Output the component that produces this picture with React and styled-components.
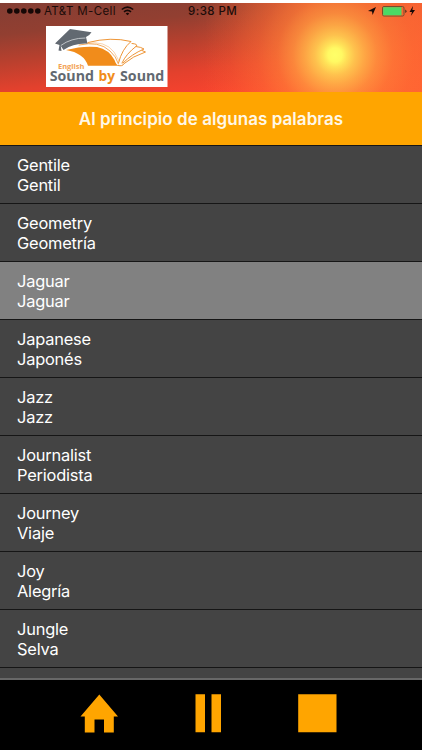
import React from 'react';
import styled, { createGlobalStyle } from 'styled-components';

const GlobalStyle = createGlobalStyle`
  * { box-sizing: border-box; }
  body { margin: 0; background: #fff; font-family: Inter, "Liberation Sans", sans-serif; }
`;

const Screen = styled.main`
  width: 422px;
  height: 750px;
  padding-top: 3px;
  display: flex;
  flex-direction: column;
  overflow: hidden;
  background: #fff;
`;

const Header = styled.header`
  flex: 0 0 89px;
  display: flex;
  flex-direction: column;
  background:
    radial-gradient(circle at 335px 52px, #ffff68 0, #fff963 7px, rgba(255, 232, 90, 0.95) 12px, rgba(255, 210, 82, 0.86) 20px, rgba(255, 188, 74, 0.76) 30px, rgba(255, 163, 66, 0.62) 42px, rgba(255, 138, 58, 0.44) 58px, rgba(255, 120, 54, 0.28) 78px, rgba(255, 105, 50, 0.12) 105px, rgba(255, 90, 50, 0) 145px),
    linear-gradient(90deg, rgba(255, 100, 50, 0) 205px, rgba(255, 100, 50, 0.75) 310px, rgba(255, 100, 50, 0.9) 422px),
    linear-gradient(174deg, #843e34 0%, #923f31 24%, #b8402e 44%, #e3412d 66%, #fb432e 87%, #ff482f 100%);
`;

const StatusBar = styled.div`
  height: 16px;
  padding: 0 5px 0 7px;
  display: grid;
  grid-template-columns: 181px 1fr auto;
  align-items: center;
  color: #1c0c09;
  font-size: 11.5px;
  line-height: 16px;
  white-space: nowrap;
`;

const Carrier = styled.div`
  display: flex;
  align-items: center;
  letter-spacing: 0.38px;
`;

const SignalDots = styled.svg`
  width: 35px;
  height: 8px;
  margin-right: 2px;
`;

const WifiIcon = styled.svg`
  width: 13px;
  height: 10px;
  margin-left: 5px;
`;

const Clock = styled.div`
  font-weight: 500;
  letter-spacing: 0.45px;
`;

const PowerIcons = styled.svg`
  width: 50px;
  height: 14px;
`;

const Logo = styled.svg`
  width: 122px;
  height: 61px;
  margin: 7px 0 0 46px;
`;

const Title = styled.h1`
  flex: 0 0 53px;
  margin: 0;
  display: flex;
  align-items: center;
  justify-content: center;
  background: #ffa500;
  color: #fff8e8;
  font-size: 17px;
  font-weight: 600;
  letter-spacing: 0.06px;
`;

const WordList = styled.ul`
  flex: 1 1 0;
  min-height: 0;
  margin: 0;
  padding: 0;
  list-style: none;
  overflow: hidden;
  background: #444;
`;

const WordRow = styled.li`
  height: 58px;
  padding: 9px 17px 0;
  border-top: 1px solid #161616;
  background: ${({ $active }) => ($active ? '#818181' : '#444')};
  color: #fff;
  font-size: 16.4px;
  line-height: 20.4px;
`;

const Word = styled.div`
  letter-spacing: -0.2px;
`;

const Controls = styled.footer`
  flex: 0 0 72px;
  padding: 14px 85px 0 80px;
  display: flex;
  justify-content: space-between;
  align-items: flex-start;
  border-top: 2px solid #686868;
  background: #000;
`;

const ControlButton = styled.button`
  width: ${({ $width }) => $width}px;
  height: 39px;
  padding: 0;
  border: 0;
  background: none;
  color: #ffa500;
  svg { display: block; width: 100%; height: 100%; fill: currentColor; }
`;

const words = [
  ['Gentile', 'Gentil'],
  ['Geometry', 'Geometría'],
  ['Jaguar', 'Jaguar'],
  ['Japanese', 'Japonés'],
  ['Jazz', 'Jazz'],
  ['Journalist', 'Periodista'],
  ['Journey', 'Viaje'],
  ['Joy', 'Alegría'],
  ['Jungle', 'Selva'],
];

function BrandLogo() {
  return (
    <Logo viewBox="0 1 122 61" role="img" aria-label="English Sound by Sound">
      <rect y="1" width="121.5" height="61" fill="#fff" />
      <path d="M20 25Q37 20.500 51 22Q63 24.500 68.500 35Q70 40 73 40.800H42Q38 28 20 25Z" fill="#f18c1b" />
      <g fill="none" stroke="#ee9638" strokeWidth="1" strokeLinecap="round" strokeLinejoin="round">
        <path d="M42 17.500Q65 11.500 85 16.500Q76 24 72.500 38" />
        <path d="M33 20Q53 15.500 64 26Q70 31 72.500 39" strokeWidth="0.8" />
        <path d="M40 18.500Q59 15 68 27Q71 32 73 36" strokeWidth="0.4" />
        <path d="M86 18.500Q92 19 90.500 21Q80 29 76 38" />
        <path d="M90 21.500Q95 22 98 24Q86 29 77 38" />
        <path d="M96 25.500L99.500 27Q87 31 77.500 39Q77 41.500 72 40.500" />
      </g>
      <path d="M24 4L45.500 7.200Q44 10 40 12L41.500 18.500Q27 18 17.500 25L14.800 21L15.500 26L12.500 25.500L13.500 20L9 18.500Z" fill="#626971" />
      <path d="M14.800 20.500Q25 13 39.500 13" fill="none" stroke="#d7d9dc" strokeWidth="0.8" />
      <g fontFamily='"Open Sans", sans-serif' fontWeight="700">
        <text x="12" y="44.400" fontSize="7.400" fill="#f3a154" textLength="26.500" lengthAdjust="spacingAndGlyphs">English</text>
        <g fontSize="14">
          <text x="3.700" y="55.600" fill="#626971" textLength="44.300" lengthAdjust="spacingAndGlyphs">Sound</text>
          <text x="52.500" y="55.600" fill="#f18c1b" textLength="16.500" lengthAdjust="spacingAndGlyphs">by</text>
          <text x="74" y="55.600" fill="#626971" textLength="44.300" lengthAdjust="spacingAndGlyphs">Sound</text>
        </g>
      </g>
    </Logo>
  );
}

export default function App() {
  return (
    <>
      <GlobalStyle />
      <Screen>
        <Header>
          <StatusBar>
            <Carrier>
              <SignalDots viewBox="0 0 35 8" fill="#160806">
                {[2.8, 9.8, 16.8, 23.8, 30.8].map((x) => <circle key={x} cx={x} cy="4" r="2.8" />)}
              </SignalDots>
              AT&amp;T M-Cell
              <WifiIcon viewBox="0 0 13 10" fill="none" stroke="#160806" strokeWidth="1.6">
                <path d="M.8 3.500Q6.500 -1.400 12.200 3.500M3 5.800Q6.500 2.800 10 5.800" />
                <path d="M4.700 7.400Q6.500 5.900 8.300 7.400L6.500 9.300Z" fill="#160806" stroke="none" />
              </WifiIcon>
            </Carrier>
            <Clock>9:38 PM</Clock>
            <PowerIcons viewBox="0 0 50 14">
              <path d="M9 3L5.600 11L5 7.400L1 7Z" fill="#160806" />
              <rect x="15.500" y="2.500" width="21.500" height="9.500" rx="1.500" fill="none" stroke="#71502c" />
              <rect x="16.200" y="3.200" width="18.300" height="8.100" fill="#4cda65" />
              <path d="M38 5.500Q39.700 6 39.700 7.200Q39.700 8.400 38 9Z" fill="#713a20" />
              <path d="M46 2L42.500 8H45L43.800 12L48 6H45.400Z" fill="#160806" />
            </PowerIcons>
          </StatusBar>
          <BrandLogo />
        </Header>
        <Title>Al principio de algunas palabras</Title>
        <WordList>
          {words.map(([english, spanish]) => (
            <WordRow key={english} $active={english === 'Jaguar'}>
              <Word lang="en">{english}</Word>
              <Word lang="es">{spanish}</Word>
            </WordRow>
          ))}
          <WordRow aria-hidden="true" />
        </WordList>
        <Controls>
          <ControlButton $width={39} aria-label="Inicio">
            <svg viewBox="0 0 39 39"><path d="M19.300 .5L38 22.500H33.800V38.500H24V25.500H14.500V38.500H4.800V22.500H.5Z" /></svg>
          </ControlButton>
          <ControlButton $width={27} aria-label="Pausa">
            <svg viewBox="0 0 27 39"><path d="M.5 .2H10V38.200H.5ZM16.500 .2H26V38.200H16.500Z" /></svg>
          </ControlButton>
          <ControlButton $width={39} aria-label="Detener">
            <svg viewBox="0 0 39 39"><path d="M.2 .2H38.500V38.200H.2Z" /></svg>
          </ControlButton>
        </Controls>
      </Screen>
    </>
  );
}
